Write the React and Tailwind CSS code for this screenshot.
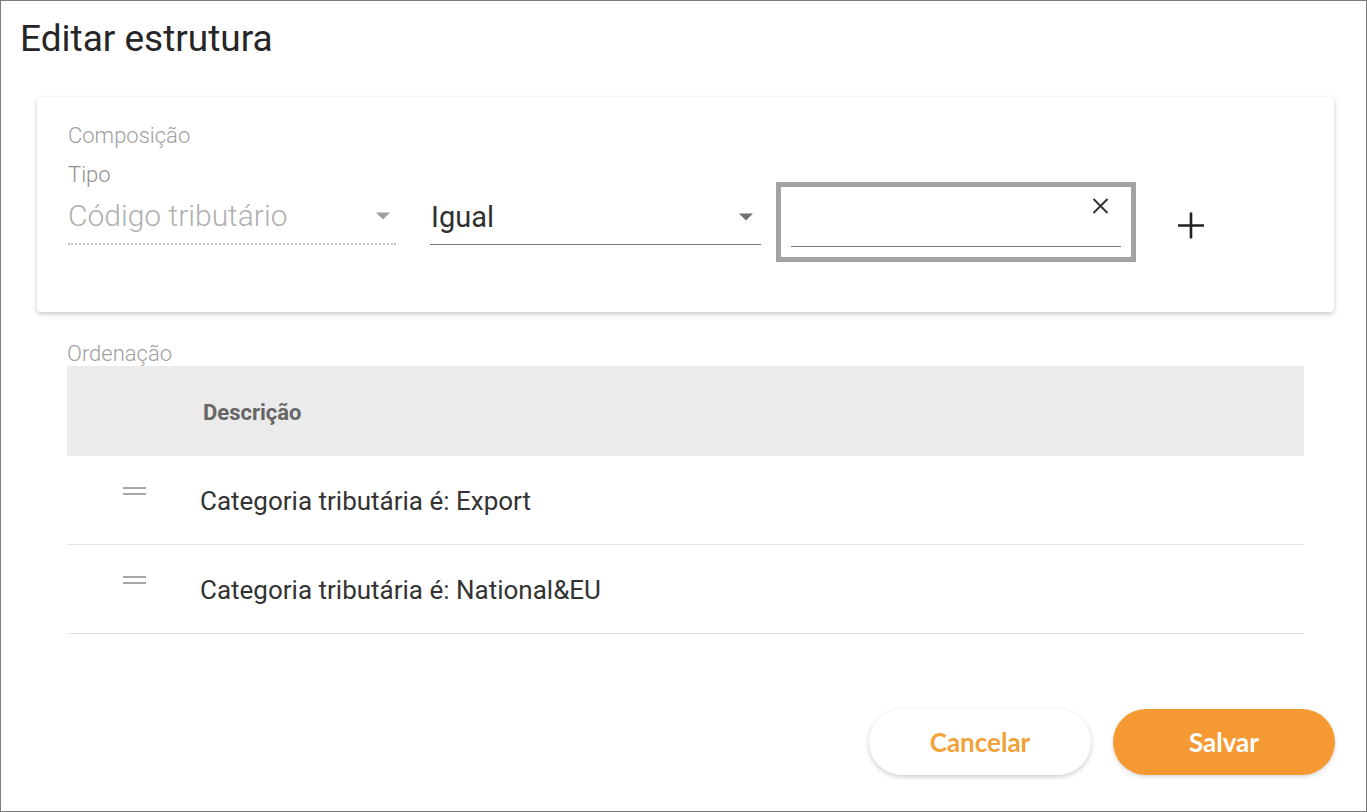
import React from "react";

const Caret = ({ color = "#757575" }) => (
  <svg width="16" height="8" viewBox="0 0 16 8"><path d="M1 0.5h14L8 7.5z" fill={color} /></svg>
);

export default function App() {
  return (
    <div className="w-[1367px] h-[812px] bg-white border border-[#7a7a7a] box-border flex flex-col" style={{ fontFamily: "Roboto, 'Noto Sans', sans-serif" }}>
      <div className="pl-[19px] pt-[15px] h-[96px] text-[37px] text-[#262626] leading-[46px]">Editar estrutura</div>
      <div className="ml-[36px] mr-[32px] h-[215px] bg-white rounded-[4px] shadow-[0_2px_5px_rgba(0,0,0,0.22)] pl-[31px] pt-[25px] flex flex-col">
        <div className="text-[22px] font-light text-[#a0a0a0] leading-[28px]">Composição</div>
        <div className="text-[22px] font-light text-[#909090] leading-[28px] mt-[11px]">Tipo</div>
        <div className="flex items-start">
          <div className="w-[328px] h-[56px] border-b-2 border-dotted border-[#c4c4c4] flex items-center justify-between pr-[5px]">
            <span className="text-[30px] font-light text-[#b0b0b0] leading-[36px]">Código tributário</span>
            <Caret color="#9e9e9e" />
          </div>
          <div className="ml-[34px] w-[331px] h-[56px] border-b border-[#7a7a7a] flex items-center justify-between pl-[1px] pr-[7px]">
            <span className="text-[29px] text-[#303030] leading-[36px]">Igual</span>
            <Caret color="#707070" />
          </div>
          <div className="ml-[15px] -mt-[7px] w-[360px] h-[80px] border-[5px] border-[#a3a3a3] flex flex-col px-[10px] pt-[11px]">
            <div className="flex justify-end pr-[12px]">
              <svg width="17" height="16" viewBox="0 0 17 16"><path d="M1.5 1L15.5 15M15.5 1L1.5 15" stroke="#333" strokeWidth="2" /></svg>
            </div>
            <div className="mt-[32px] border-b border-[#7a7a7a]" />
          </div>
          <div className="ml-[41px] mt-[23px]">
            <svg width="28" height="27" viewBox="0 0 28 27"><path d="M14 0.5v26M1 13.5h26" stroke="#222" strokeWidth="2.6" /></svg>
          </div>
        </div>
      </div>
      <div className="ml-[66px] mr-[62px] mt-[30px] flex flex-col">
        <div className="text-[22px] font-light text-[#a0a0a0] leading-[28px] -mt-[2px] h-[26px]">Ordenação</div>
        <div className="h-[90px] bg-[#ebebeb] flex items-center pl-[136px] pt-[2px]">
          <span className="text-[22px] font-bold text-[#666]">Descrição</span>
        </div>
        {["Categoria tributária é: Export", "Categoria tributária é: National&EU"].map((t) => (
          <div key={t} className="h-[89px] border-b border-[#e2e2e2] flex items-center pl-[56px]">
            <div className="-mt-[18px] w-[23px]">
              <svg width="23" height="8" viewBox="0 0 23 8"><path d="M0 1h23M0 7h23" stroke="#8a8a8a" strokeWidth="1.5" /></svg>
            </div>
            <span className="ml-[54px] text-[26px] text-[#333] leading-[32px] pt-[2px]">{t}</span>
          </div>
        ))}
      </div>
      <div className="flex justify-end gap-[22px] mt-[75px] pr-[31px]" style={{ fontFamily: "Lato, 'Liberation Sans', sans-serif" }}>
        <button className="w-[222px] h-[66px] rounded-full bg-white shadow-[0_2px_5px_rgba(0,0,0,0.2)] text-[26px] font-bold text-[#f0a23b]">Cancelar</button>
        <button className="w-[222px] h-[66px] rounded-full bg-[#f59a33] shadow-[0_2px_4px_rgba(0,0,0,0.15)] text-[26px] font-bold text-white">Salvar</button>
      </div>
    </div>
  );
}
